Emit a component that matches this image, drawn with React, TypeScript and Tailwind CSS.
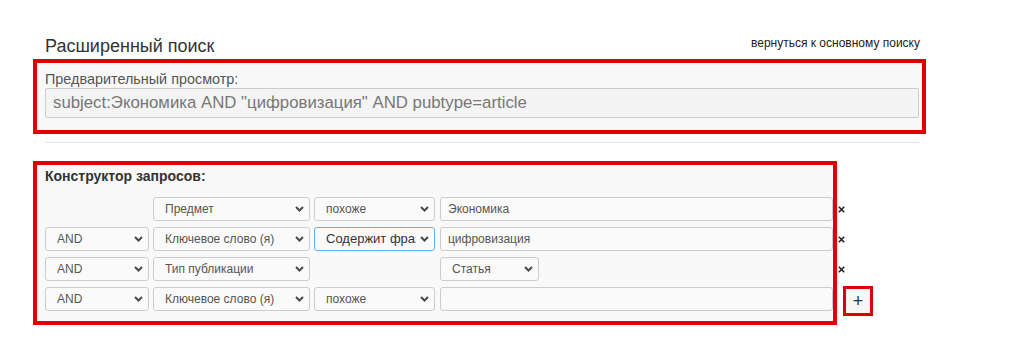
import React from "react";

const font = { fontFamily: '"Liberation Sans", Arial, sans-serif' };

function Chevron() {
  return (
    <svg width="9" height="6" viewBox="0 0 9 6" className="shrink-0">
      <polyline points="1,1 4.5,4.5 8,1" fill="none" stroke="#4a4a4a" strokeWidth="2" />
    </svg>
  );
}

function Select({ w, text, focus }: { w: string; text: string; focus?: boolean }) {
  return (
    <div
      className={`${w} h-[24px] shrink-0 flex items-center gap-[4px] rounded-[3px] border bg-[#fafafa] pl-[11px] pr-[5px] ${
        focus ? "border-[#66afe9] text-[#333] text-[13px]" : "border-[#ccc] text-[#555] text-[12px]"
      }`}
    >
      <span className="flex-1 overflow-hidden whitespace-nowrap">{text}</span>
      <Chevron />
    </div>
  );
}

function ValueInput({ text }: { text: string }) {
  return (
    <div className="w-[393px] h-[24px] shrink-0 flex items-center rounded-[3px] border border-[#ccc] bg-[#fafafa] pl-[7px] text-[12px] text-[#555]">
      {text}
    </div>
  );
}

function Remove() {
  return (
    <div className="ml-[5px] h-[24px] flex items-center">
      <svg width="7" height="7" viewBox="0 0 7 7">
        <path d="M0.8 0.8 L6.2 6.2 M6.2 0.8 L0.8 6.2" stroke="#222" strokeWidth="1.6" />
      </svg>
    </div>
  );
}

export default function App() {
  return (
    <div className="w-[1020px] h-[361px] bg-white relative" style={font}>
      <div className="pt-[34px] pl-[45px] w-[919px] flex justify-between items-start">
        <div className="text-[18px] leading-[24px] text-[#333]">Расширенный поиск</div>
        <div className="text-[12px] leading-[16px] text-[#222] mt-[1px] mr-[-1px]">вернуться к основному поиску</div>
      </div>

      <div className="ml-[33px] mt-[1px] w-[893px] h-[75px] border-[4px] border-[#e10000] bg-[#f9f9f9] pl-[8px] pr-[3px]">
        <div className="pt-[8px] text-[14.4px] leading-[16px] text-[#555]">Предварительный просмотр:</div>
        <div className="mt-[1px] h-[30px] rounded-[2px] border border-[#ccc] bg-[#f4f4f4] flex items-center pl-[7px] text-[16.8px] text-[#777]">
          subject:Экономика AND "цифровизация" AND pubtype=article
        </div>
      </div>

      <div className="ml-[45px] mt-[8px] w-[874px] h-px bg-[#e6e6e6]" />

      <div className="ml-[33px] mt-[18px] w-[804px] h-[164px] border-[4px] border-[#e10000] bg-[#f9f9f9] pl-[8px]">
        <div className="pt-[3px] text-[14px] leading-[16px] font-bold text-[#333]">Конструктор запросов:</div>
        <div className="mt-[13px] flex flex-col gap-[6px]">
          <div className="flex items-start">
            <div className="w-[104px] shrink-0" />
            <div className="w-[4px] shrink-0" />
            <Select w="w-[157px]" text="Предмет" />
            <div className="w-[4px] shrink-0" />
            <Select w="w-[121px]" text="похоже" />
            <div className="w-[5px] shrink-0" />
            <ValueInput text="Экономика" />
            <Remove />
          </div>
          <div className="flex items-start">
            <Select w="w-[104px]" text="AND" />
            <div className="w-[4px] shrink-0" />
            <Select w="w-[157px]" text="Ключевое слово (я)" />
            <div className="w-[4px] shrink-0" />
            <Select w="w-[121px]" text="Содержит фразу" focus />
            <div className="w-[5px] shrink-0" />
            <ValueInput text="цифровизация" />
            <Remove />
          </div>
          <div className="flex items-start">
            <Select w="w-[104px]" text="AND" />
            <div className="w-[4px] shrink-0" />
            <Select w="w-[157px]" text="Тип публикации" />
            <div className="w-[4px] shrink-0" />
            <div className="w-[121px] shrink-0" />
            <div className="w-[5px] shrink-0" />
            <Select w="w-[99px]" text="Статья" />
            <div className="w-[294px] shrink-0" />
            <Remove />
          </div>
          <div className="flex items-start">
            <Select w="w-[104px]" text="AND" />
            <div className="w-[4px] shrink-0" />
            <Select w="w-[157px]" text="Ключевое слово (я)" />
            <div className="w-[4px] shrink-0" />
            <Select w="w-[121px]" text="похоже" />
            <div className="w-[5px] shrink-0" />
            <ValueInput text="" />
            <div className="ml-[10px] mt-[-1px] w-[30px] h-[30px] shrink-0 border-[3px] border-[#e10000] bg-[#f6f6f6] flex items-center justify-center text-[18px] leading-none text-[#333]">
              +
            </div>
          </div>
        </div>
      </div>
    </div>
  );
}
